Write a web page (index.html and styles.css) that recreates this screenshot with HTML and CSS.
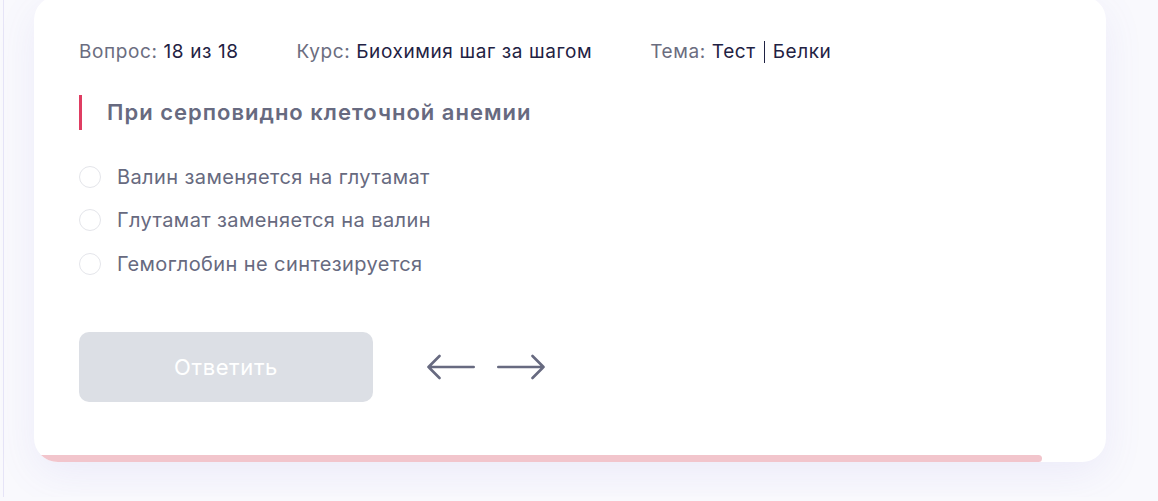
FILE: index.html
```html
<!DOCTYPE html>
<html lang="ru">
<head>
    <meta charset="UTF-8">
    <meta name="viewport" content="width=device-width, initial-scale=1.0">
    <title>Тест</title>
    <link rel="stylesheet" href="styles.css">
</head>
<body>
    <div class="page">
        <div class="card">
            <div class="card-body">
                <div class="meta">
                    <span class="meta-item">Вопрос: <b>18 из 18</b></span>
                    <span class="meta-item">Курс: <b>Биохимия шаг за шагом</b></span>
                    <span class="meta-item">Тема: <b>Тест <span class="sep"></span> Белки</b></span>
                </div>

                <h2 class="question">При серповидно клеточной анемии</h2>

                <div class="options">
                    <label class="option"><span class="radio"></span>Валин заменяется на глутамат</label>
                    <label class="option"><span class="radio"></span>Глутамат заменяется на валин</label>
                    <label class="option"><span class="radio"></span>Гемоглобин не синтезируется</label>
                </div>

                <div class="actions">
                    <button class="answer" disabled>Ответить</button>
                    <button class="arrow" aria-label="Назад">
                        <svg width="48" height="26" viewBox="0 0 48 26"><path d="M46.7 13H1.5M12.5 2L1.5 13l11 11" fill="none" stroke="#676a80" stroke-width="2.6" stroke-linecap="round" stroke-linejoin="round"/></svg>
                    </button>
                    <button class="arrow" aria-label="Вперёд">
                        <svg width="48" height="26" viewBox="0 0 48 26"><path d="M1.3 13h45.2M35.5 2l11 11-11 11" fill="none" stroke="#676a80" stroke-width="2.6" stroke-linecap="round" stroke-linejoin="round"/></svg>
                    </button>
                </div>
            </div>
            <div class="progress">
                <div class="progress-fill" style="width: 94%"></div>
            </div>
        </div>
    </div>
</body>
</html>
```

FILE: styles.css
```css
body {
    margin: 0;
    font-family: Inter, "Noto Sans", sans-serif;
    background-color: #f9f9fd;
    color: #676a80;
}
.page {
    margin-left: 3px;
    border-left: 1px solid #e6e4f7;
    padding-left: 30px;
    min-height: 100vh;
    box-sizing: border-box;
}
.card {
    width: 1072px;
    margin-top: -4px;
    background-color: #fff;
    border-radius: 24px;
    overflow: hidden;
    box-shadow: 0 12px 40px rgba(110, 100, 210, 0.09);
}
.card-body {
    padding: 45px 45px 53px;
}
.meta {
    display: flex;
    align-items: baseline;
    gap: 58px;
    height: 20px;
    font-size: 19px;
    line-height: 20px;
    letter-spacing: 0.6px;
    color: #6b6d80;
}
.meta b {
    font-weight: 400;
    color: #1f2243;
}
.sep {
    display: inline-block;
    width: 1px;
    height: 22px;
    background-color: #1f2243;
    vertical-align: -5px;
    margin: 0 2px;
}
.question {
    margin: 34px 0 0;
    border-left: 3px solid #df3d62;
    padding-left: 25px;
    font-size: 22px;
    font-weight: 600;
    line-height: 35px;
    letter-spacing: 1px;
    color: #676a80;
}
.options {
    margin-top: 35px;
    display: flex;
    flex-direction: column;
    gap: 20px;
}
.option {
    display: flex;
    align-items: center;
    gap: 16px;
    height: 23.5px;
    font-size: 20px;
    letter-spacing: 0.4px;
    color: #676a80;
    cursor: pointer;
}
.radio {
    width: 20px;
    height: 20px;
    border: 1.5px solid #e4e5ea;
    border-radius: 50%;
}
.actions {
    display: flex;
    align-items: center;
    margin-top: 56px;
}
.answer {
    width: 294px;
    height: 70px;
    border: none;
    border-radius: 10px;
    background-color: #dcdfe5;
    color: #fff;
    font-family: inherit;
    font-size: 22px;
    letter-spacing: 0.6px;
    margin-right: 54px;
}
.arrow {
    background: none;
    border: none;
    padding: 0;
    margin-right: 22px;
    display: flex;
    cursor: pointer;
}
.progress {
    height: 7px;
}
.progress-fill {
    height: 100%;
    background-color: #f2c5cc;
    border-radius: 0 4px 4px 0;
}
```
